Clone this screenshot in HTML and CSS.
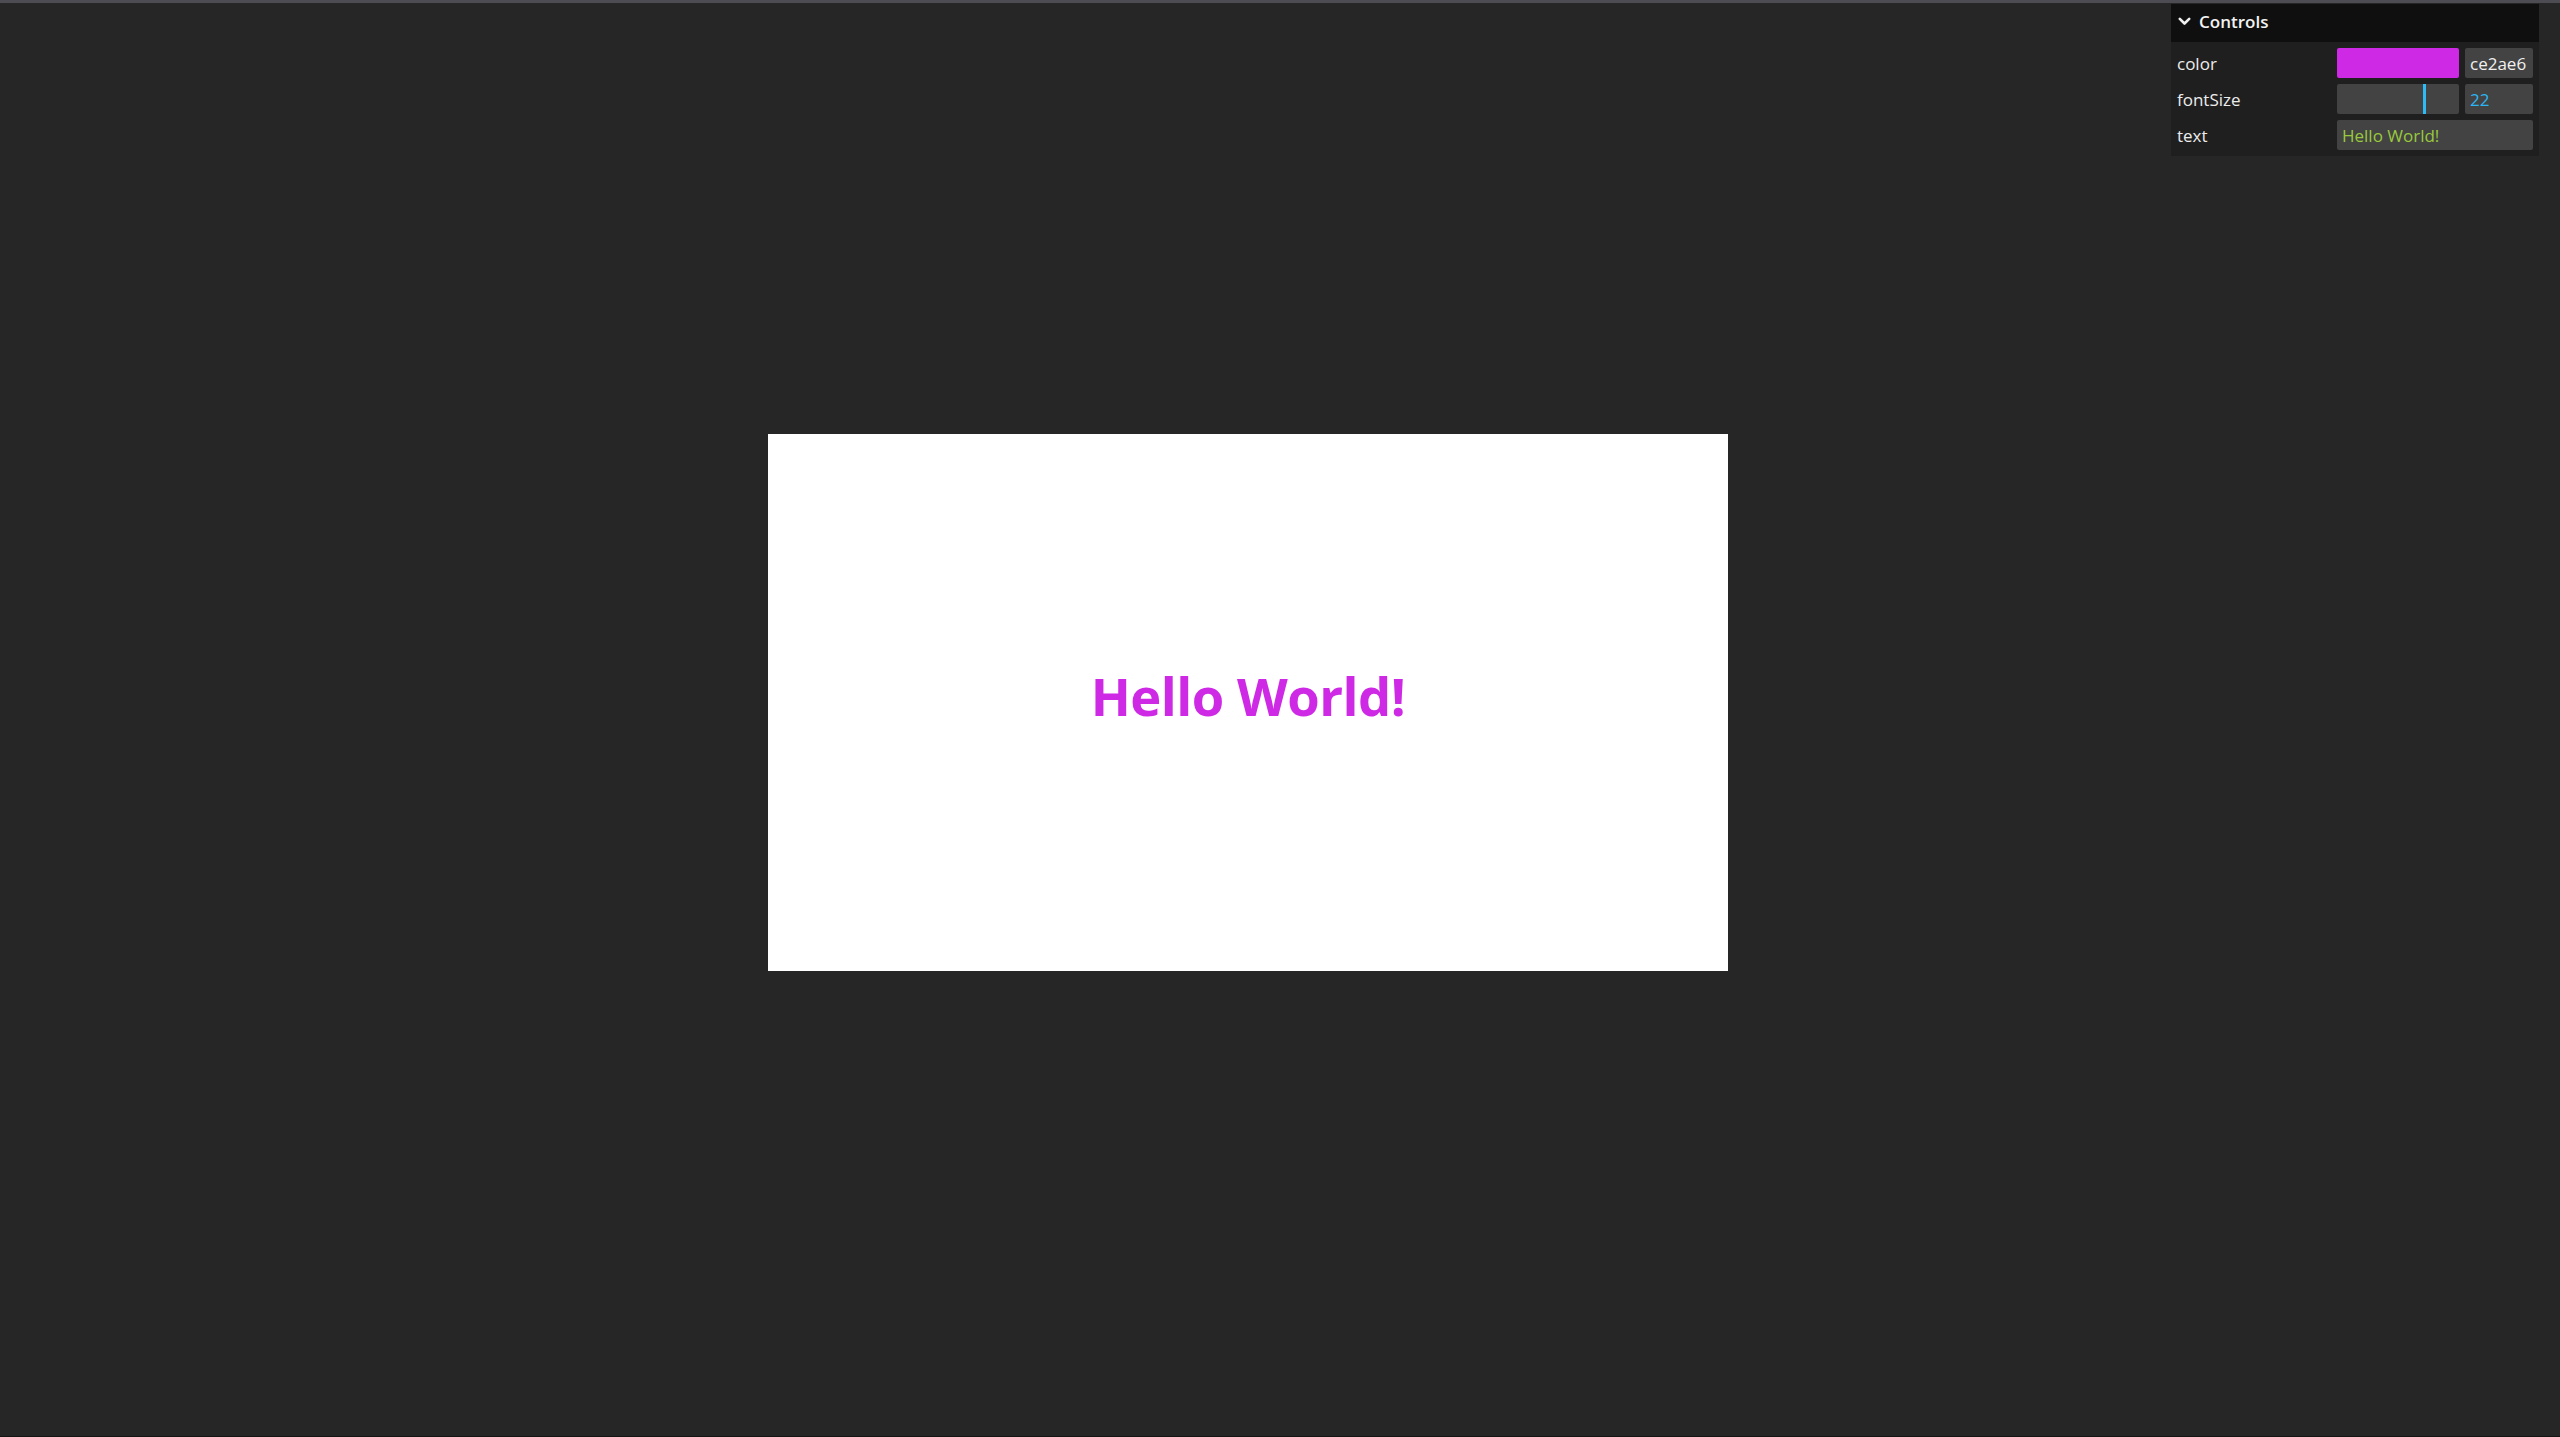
FILE: index.html
```html
<!DOCTYPE html>
<html>
<head>
<meta charset="utf-8">
<link rel="stylesheet" href="styles.css">
</head>
<body>
<div class="topline"></div>
<main class="stage">
  <div class="canvas">
    <span class="hello">Hello World!</span>
  </div>
</main>
<div class="bottomline"></div>
<aside class="panel">
  <div class="panel-head">
    <svg class="chev" width="13" height="9" viewBox="0 0 13 9"><path d="M1.8 1.8 L6.5 6.5 L11.2 1.8" fill="none" stroke="#f0f0f0" stroke-width="2.6" stroke-linecap="round" stroke-linejoin="round"/></svg>
    <span class="panel-title">Controls</span>
  </div>
  <div class="panel-body">
    <div class="row">
      <span class="label">color</span>
      <div class="ctrl split">
        <div class="swatch"></div>
        <div class="field">ce2ae6</div>
      </div>
    </div>
    <div class="row">
      <span class="label">fontSize</span>
      <div class="ctrl split">
        <div class="slider"><div class="knob"></div></div>
        <div class="field num">22</div>
      </div>
    </div>
    <div class="row">
      <span class="label">text</span>
      <div class="ctrl">
        <div class="field wide txt">Hello World!</div>
      </div>
    </div>
  </div>
</aside>
</body>
</html>
```
FILE: styles.css
```css
html, body {
  margin: 0;
  padding: 0;
}
body {
  width: 2560px;
  height: 1437px;
  background: #262626;
  overflow: hidden;
  display: flex;
  flex-direction: column;
  font-family: "Open Sans", "Noto Sans", sans-serif;
}
.topline {
  height: 3px;
  background: #4c4c52;
  flex: none;
}
.stage {
  flex: 1;
  padding: 431px 0 0 768px;
}
.bottomline {
  height: 1px;
  background: #141414;
  flex: none;
}
.canvas {
  width: 960px;
  height: 537px;
  background: #ffffff;
  display: flex;
  align-items: center;
  justify-content: center;
}
.hello {
  color: #ce2ae6;
  font-family: "Open Sans", sans-serif;
  font-weight: 700;
  font-size: 52.5px;
  letter-spacing: -0.5px;
  position: relative;
  top: -7px;
}
.panel {
  position: absolute;
  top: 4px;
  right: 21px;
  width: 368px;
  background: #1f1f1f;
  color: #e6e6e6;
}
.panel-head {
  height: 38px;
  box-sizing: border-box;
  padding-bottom: 4px;
  background: #0f0f0f;
  display: flex;
  align-items: center;
  padding-left: 7px;
  gap: 8px;
}
.chev {
  display: block;
}
.panel-title {
  font-size: 17px;
  font-weight: 600;
  color: #f2f2f2;
}
.panel-body {
  padding: 6px 6px;
  display: flex;
  flex-direction: column;
  gap: 6px;
}
.row {
  height: 30px;
  display: flex;
  align-items: center;
}
.label {
  width: 160px;
  font-size: 17px;
  color: #ececec;
}
.ctrl {
  width: 196px;
  display: flex;
  height: 30px;
}
.split {
  gap: 6px;
}
.swatch {
  width: 122px;
  height: 30px;
  background: #ce2ae6;
  border-radius: 2px;
}
.slider {
  width: 122px;
  height: 30px;
  background: #434343;
  border-radius: 2px;
  position: relative;
}
.knob {
  position: absolute;
  left: 86px;
  top: 0;
  width: 3px;
  height: 30px;
  background: #2cbdf8;
}
.field {
  width: 68px;
  height: 30px;
  box-sizing: border-box;
  background: #434343;
  border-radius: 2px;
  padding-left: 5px;
  display: flex;
  align-items: center;
  font-size: 17px;
  color: #f0f0f0;
}
.num {
  color: #2cb5f2;
}
.wide {
  width: 196px;
}
.txt {
  color: #98c93c;
  font-size: 17px;
}
```
